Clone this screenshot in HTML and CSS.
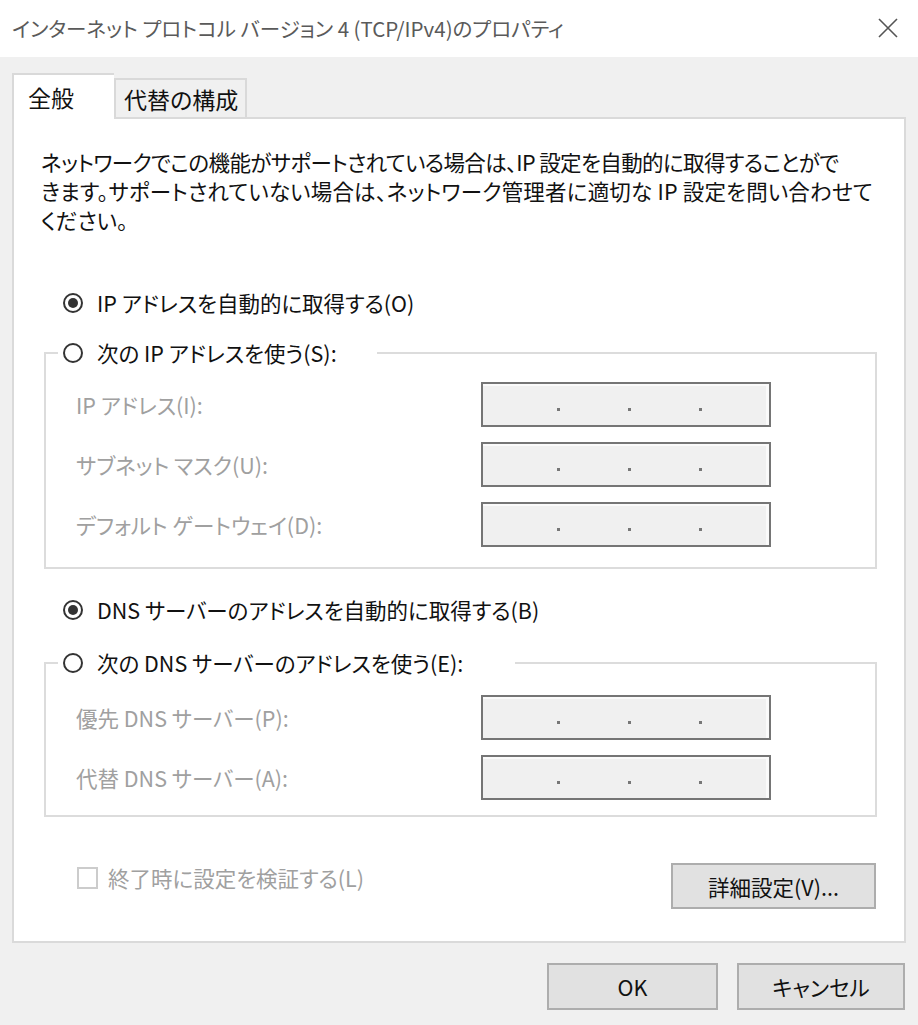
FILE: index.html
```html
<!DOCTYPE html>
<html lang="ja">
<head>
<meta charset="utf-8">
<title>インターネット プロトコル バージョン 4 (TCP/IPv4)のプロパティ</title>
<link rel="stylesheet" href="styles.css">
</head>
<body>
<div class="window">
  <div class="titlebar">
    <span class="title">インターネット プロトコル バージョン 4 (TCP/IPv4)のプロパティ</span>
    <svg class="close" width="22" height="22" viewBox="0 0 22 22"><path d="M2 2 L20 20 M20 2 L2 20" stroke="#555" stroke-width="1.6" fill="none"/></svg>
  </div>
  <div class="body">
    <div class="tabs">
      <div class="tab active">全般</div>
      <div class="tab">代替の構成</div>
    </div>
    <div class="panel">
      <p class="desc"><span class="line1">ネットワークでこの機能がサポートされている場合は、IP 設定を自動的に取得することがで</span><span class="line2">きます。サポートされていない場合は、ネットワーク管理者に適切な IP 設定を問い合わせて</span><span>ください。</span></p>

      <div class="radio-row first"><span class="radio checked"></span><span>IP アドレスを自動的に取得する(O)</span></div>

      <fieldset class="group g1">
        <legend class="legend l1"><span class="radio"></span><span>次の IP アドレスを使う(S):</span></legend>
        <div class="field"><span class="label">IP アドレス(I):</span><span class="ipbox"><i></i><i></i><i></i></span></div>
        <div class="field"><span class="label">サブネット マスク(U):</span><span class="ipbox"><i></i><i></i><i></i></span></div>
        <div class="field"><span class="label">デフォルト ゲートウェイ(D):</span><span class="ipbox"><i></i><i></i><i></i></span></div>
      </fieldset>

      <div class="radio-row second"><span class="radio checked"></span><span>DNS サーバーのアドレスを自動的に取得する(B)</span></div>

      <fieldset class="group g2">
        <legend class="legend l2"><span class="radio"></span><span>次の DNS サーバーのアドレスを使う(E):</span></legend>
        <div class="field"><span class="label">優先 DNS サーバー(P):</span><span class="ipbox"><i></i><i></i><i></i></span></div>
        <div class="field"><span class="label">代替 DNS サーバー(A):</span><span class="ipbox"><i></i><i></i><i></i></span></div>
      </fieldset>

      <div class="bottom-row">
        <div class="check"><span class="box"></span><span>終了時に設定を検証する(L)</span></div>
        <button class="btn adv">詳細設定(V)...</button>
      </div>
    </div>
    <div class="footer">
      <button class="btn ok">OK</button>
      <button class="btn cancel">キャンセル</button>
    </div>
  </div>
</div>
</body>
</html>
```

FILE: styles.css
```css
* { box-sizing: border-box; }
html, body { margin: 0; padding: 0; }
body {
  font-family: "Noto Sans CJK JP", "Noto Sans", sans-serif;
  font-feature-settings: "palt";
  font-size: 21.5px;
  color: #111;
  background: #f0f0f0;
}
.window { width: 918px; height: 1025px; background: #f0f0f0; }
.titlebar {
  height: 57px;
  background: #fff;
  display: flex;
  align-items: center;
  justify-content: space-between;
  padding: 0 19px 2px 12px;
}
.title { font-size: 20.5px; color: #5a5a5a; white-space: nowrap; }
.close { display: block; }

.body { padding: 16px 12px 0 12px; }
.tabs { display: flex; align-items: flex-end; height: 44px; position: relative; z-index: 1; }
.tab {
  height: 39px;
  border: 2px solid #d9d9d9;
  border-bottom: none;
  background: #f0f0f0;
  padding: 0 6px 0 8px;
  display: flex;
  align-items: center;
  font-size: 23px;
  width: 133px;
  white-space: nowrap;
}
.tab.active {
  height: 46px;
  margin-bottom: -2px;
  background: #fff;
  width: 102px;
  padding-left: 14px;
  border-right: none;
}

.panel {
  height: 826px;
  background: #fff;
  border: 2px solid #dadada;
  padding: 28px 28px 0 14px;
}
.desc { margin: 0 0 0 13px; line-height: 29px; }
.desc span { display: block; white-space: nowrap; }
.desc .line1 { letter-spacing: -0.6px; }
.desc .line2 { letter-spacing: 0.2px; }

.radio-row { display: flex; align-items: center; gap: 14px; height: 29px; margin-left: 35px; white-space: nowrap; }
.radio-row.first { margin-top: 54px; }
.radio-row.second { margin-top: 26px; }
.radio {
  width: 20px; height: 20px; flex: none;
  border: 2px solid #333;
  border-radius: 50%;
  display: inline-flex; align-items: center; justify-content: center;
  background: #fff;
}
.radio.checked::after {
  content: ""; width: 10px; height: 10px; border-radius: 50%; background: #333;
}

.group {
  margin: 21px 0 0 16px;
  width: 833px;
  border: 2px solid #dcdcdc;
  padding: 15px 0 20px 30px;
  display: grid;
  grid-template-columns: 405px 290px;
  row-gap: 15px;
}
.g2 { margin-top: 24px; padding-top: 18px; padding-bottom: 15px; }
.legend {
  display: flex; align-items: center; gap: 14px;
  height: 29px;
  margin-left: -18px;
  padding: 0 0 0 5px;
  white-space: nowrap;
  color: #111;
}
.l1 { width: 319px; }
.l2 { width: 457px; }

.field { display: contents; }
.label { color: #a0a0a0; align-self: center; white-space: nowrap; }
.ipbox {
  height: 45px;
  border: 2px solid #757575;
  background: #f0f0f0;
  box-shadow: inset 0 2px 0 #fafafa, inset -3px 0 0 #fafafa;
  display: flex;
  align-items: center;
  gap: 68px;
  padding: 10px 0 0 74px;
}
.ipbox i { width: 3px; height: 3px; background: #777; display: block; }

.bottom-row {
  display: flex; justify-content: space-between; align-items: flex-start;
  margin: 46px 0 0 49px;
}
.check { display: flex; align-items: center; gap: 10px; height: 29px; color: #a0a0a0; white-space: nowrap; }
.box { width: 21px; height: 22px; border: 2px solid #cccccc; background: #fff; }

.btn {
  font: inherit;
  font-feature-settings: "palt";
  color: #111;
  background: #e1e1e1;
  border: 2px solid #adadad;
  padding: 0;
}
.adv { width: 205px; height: 46px; }
.footer { display: flex; justify-content: flex-end; gap: 19px; padding: 20px 1px 0 0; }
.ok { width: 171px; height: 47px; }
.cancel { width: 168px; height: 47px; }
```
